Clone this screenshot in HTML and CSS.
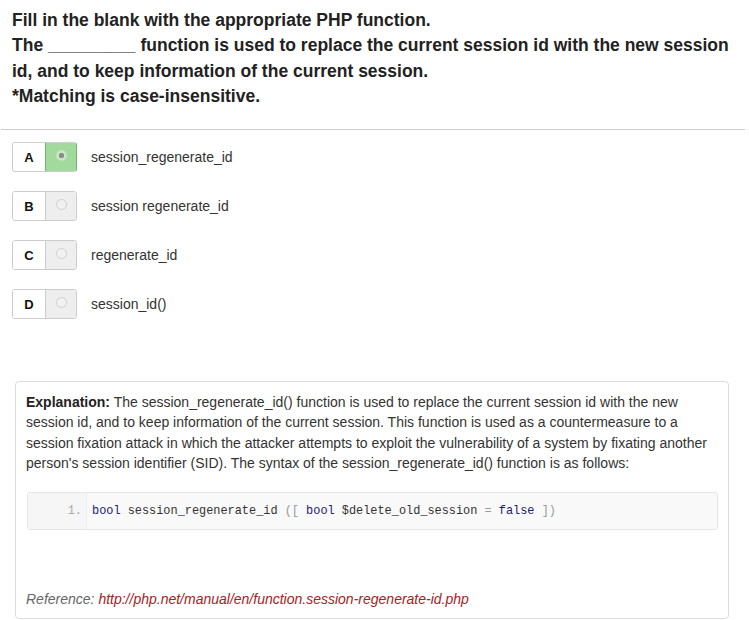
FILE: index.html
```html
<!DOCTYPE html>
<html>
<head>
<meta charset="utf-8">
<link rel="stylesheet" href="styles.css">
</head>
<body>
<div class="page">
  <div class="question">
    <p>Fill in the blank with the appropriate PHP function.</p>
    <p>The _________ function is used to replace the current session id with the new session id, and to keep information of the current session.</p>
    <p>*Matching is case-insensitive.</p>
  </div>
  <hr class="divider">
  <div class="options">
    <div class="option">
      <div class="choice">
        <span class="letter">A</span>
        <span class="radio selected"><span class="dot"></span></span>
      </div>
      <span class="label">session_regenerate_id</span>
    </div>
    <div class="option">
      <div class="choice">
        <span class="letter">B</span>
        <span class="radio"><span class="dot"></span></span>
      </div>
      <span class="label">session regenerate_id</span>
    </div>
    <div class="option">
      <div class="choice">
        <span class="letter">C</span>
        <span class="radio"><span class="dot"></span></span>
      </div>
      <span class="label">regenerate_id</span>
    </div>
    <div class="option">
      <div class="choice">
        <span class="letter">D</span>
        <span class="radio"><span class="dot"></span></span>
      </div>
      <span class="label">session_id()</span>
    </div>
  </div>
  <div class="explanation">
    <p class="text"><b>Explanation:</b> The session_regenerate_id() function is used to replace the current session id with the new session id, and to keep information of the current session. This function is used as a countermeasure to a session fixation attack in which the attacker attempts to exploit the vulnerability of a system by fixating another person's session identifier (SID). The syntax of the session_regenerate_id() function is as follows:</p>
    <div class="code">
      <span class="ln">1.</span>
      <code class="src"><span class="kw">bool</span> <span class="pl">session_regenerate_id</span> <span class="pu">([</span> <span class="kw">bool</span> <span class="pl">$delete_old_session</span> <span class="pu">=</span> <span class="kw">false</span> <span class="pu">])</span></code>
    </div>
    <p class="ref">Reference: <a href="#">http://php.net/manual/en/function.session-regenerate-id.php</a></p>
  </div>
</div>
</body>
</html>
```
FILE: styles.css
```css
html, body {
  margin: 0;
  padding: 0;
  background: #fff;
}
body {
  font-family: "Liberation Sans", Arial, sans-serif;
  color: #333;
}
.page {
  padding: 8px 0 0 0;
}
.question {
  padding: 0 12px;
  font-size: 17.5px;
  font-weight: bold;
  line-height: 25.3px;
  color: #222;
}
.question p {
  margin: 0;
}
.divider {
  margin: 20px 4px 0 1px;
  border: 0;
  border-top: 1px solid #ccc;
  height: 0;
}
.options {
  display: flex;
  flex-direction: column;
  gap: 19px;
  padding: 12px 12px 0 12px;
}
.option {
  display: flex;
  align-items: center;
  gap: 14px;
  height: 30px;
}
.choice {
  display: flex;
  width: 65px;
  height: 30px;
  box-sizing: border-box;
  border: 1px solid #ccc;
  border-radius: 3px;
  overflow: hidden;
}
.letter {
  width: 32px;
  display: flex;
  align-items: center;
  justify-content: center;
  font-weight: bold;
  font-size: 13px;
  color: #111;
  background: #fff;
}
.radio {
  flex: 1;
  display: flex;
  align-items: center;
  justify-content: center;
  background: #eee;
  border-left: 1px solid #ccc;
}
.radio.selected {
  background: #a2d99d;
  border-left-color: #74b56c;
}
.option:first-child .choice {
  border-right-color: #74b56c;
  border-top-color: #cfcfcf;
}
.dot {
  width: 11px;
  height: 11px;
  box-sizing: border-box;
  border-radius: 50%;
  border: 1px solid #cfcfcf;
  background: #f1f1f1;
  margin-top: -3px;
}
.radio.selected .dot {
  border-color: #c4e6c0;
  background: radial-gradient(circle, #8c8c8c 0 2.5px, #c7e8c3 3px);
}
.label {
  font-size: 14px;
  color: #333;
}
.explanation {
  margin: 62px 20px 0 15px;
  border: 1px solid #ddd;
  border-radius: 4px;
  padding: 10px 10px 8px 10px;
  height: 238px;
  box-sizing: border-box;
  font-size: 14px;
  color: #333;
}
.explanation .text {
  margin: 0;
  line-height: 20.3px;
}
.explanation .text b {
  color: #222;
}
.code {
  display: flex;
  margin: 19px 0 0 1px;
  height: 38px;
  box-sizing: border-box;
  background: #f9f9fa;
  border: 1px solid #e6e6e6;
  border-radius: 3px;
  font-family: "Liberation Mono", "DejaVu Sans Mono", monospace;
  font-size: 11.9px;
  line-height: 37px;
}
.ln {
  width: 59px;
  box-sizing: border-box;
  padding-right: 4px;
  text-align: right;
  color: #aaa;
  border-right: 1px solid #eee;
  background: #f6f6f7;
}
.src {
  display: block;
  padding-left: 5px;
  font-family: inherit;
  white-space: pre;
}
.kw { color: #1c1c6e; }
.pl { color: #333; }
.pu { color: #9a9a9a; }
.ref {
  margin: 61px 0 0 0;
  font-style: italic;
  color: #666;
  font-size: 14px;
}
.ref a {
  color: #a3231f;
  text-decoration: none;
}
```
